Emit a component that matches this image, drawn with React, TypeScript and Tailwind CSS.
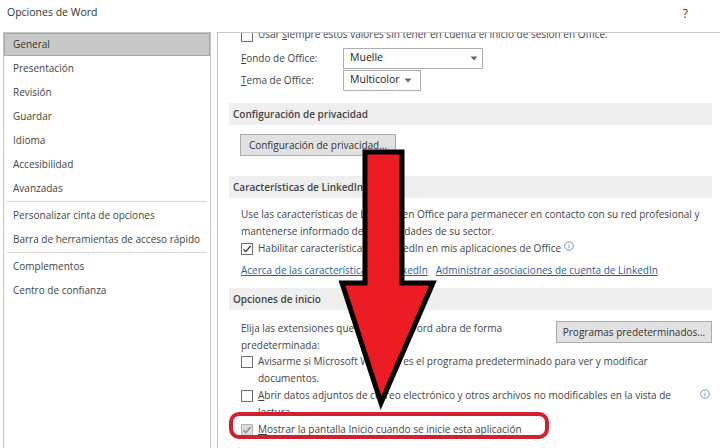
import React from 'react';

const navTop = ['Presentación', 'Revisión', 'Guardar', 'Idioma', 'Accesibilidad', 'Avanzadas'];

const Box = ({ checked, disabled }: { checked?: boolean; disabled?: boolean }) => (
  <span
    className={
      'mt-[3px] flex h-[12px] w-[12px] shrink-0 items-center justify-center border ' +
      (disabled ? 'border-[#b5b5b5] bg-[#dcdcdc]' : 'border-[#6f6f6f] bg-white')
    }
  >
    {checked && (
      <svg width="10" height="10" viewBox="0 0 10 10">
        <path d="M1.5 5.2 L3.8 7.6 L8.6 2" fill="none" stroke={disabled ? '#8a8a8a' : '#333'} strokeWidth="1.3" />
      </svg>
    )}
  </span>
);

const Info = () => (
  <svg width="10" height="10" viewBox="0 0 10 10" className="inline-block align-[1px]">
    <circle cx="5" cy="5" r="4.3" fill="none" stroke="#6b8bc0" strokeWidth="0.9" />
    <rect x="4.55" y="4.2" width="0.9" height="3.2" fill="#6b8bc0" />
    <rect x="4.55" y="2.5" width="0.9" height="0.9" fill="#6b8bc0" />
  </svg>
);

const Caret = () => (
  <svg width="8" height="5" viewBox="0 0 8 5">
    <path d="M0.5 0.5 L7.5 0.5 L4 4.5 Z" fill="#6a6a6a" />
  </svg>
);

const Section = ({ title }: { title: string }) => (
  <div className="flex h-[22px] items-center bg-[#efefef] pl-[4px] font-semibold text-[#444]">{title}</div>
);

export default function App() {
  return (
    <div className="relative h-[448px] w-[720px] overflow-hidden bg-white font-['Open_Sans',sans-serif] text-[10px] text-[#444]">
      <div className="flex h-[32px] items-start justify-between pl-[7px] pr-[32px] pt-[5px] text-[10.5px] text-[#333]">
        <span>Opciones de Word</span>
        <span className="text-[12px]">?</span>
      </div>

      <div className="flex h-[416px] pl-[3px]">
        <div className="flex w-[208px] flex-col border border-b-0 border-[#c4c4c4]">
          <div className="flex h-[23px] shrink-0 items-center border border-[#a9a9a9] bg-[#c8c8c8] pl-[8px] text-[#333]">General</div>
          {navTop.map((n) => (
            <div key={n} className="flex h-[24px] shrink-0 items-center pl-[9px]">{n}</div>
          ))}
          <div className="mx-[3px] my-[1px] h-px bg-[#d8d8d8]" />
          <div className="flex h-[24px] items-center pl-[9px]">Personalizar cinta de opciones</div>
          <div className="flex h-[24px] items-center pl-[9px]">Barra de herramientas de acceso rápido</div>
          <div className="mx-[3px] my-[1px] h-px bg-[#d8d8d8]" />
          <div className="flex h-[24px] items-center pl-[9px]">Complementos</div>
          <div className="flex h-[24px] items-center pl-[9px]">Centro de confianza</div>
        </div>

        <div className="ml-[6px] flex-1 overflow-hidden border-l border-t border-[#c4c4c4] pl-[11px] pr-[8px]">
          <div className="-mt-[10px]">
            <div className="flex h-[22px] items-center gap-[5px] pl-[12px]">
              <Box />
              <span className="leading-[17px]">
                Usar <u>s</u>iempre estos valores sin tener en cuenta el inicio de sesión en Office.
              </span>
            </div>
            <div className="mt-[2px] flex h-[22px] items-center pl-[12px]">
              <span className="w-[102px]"><u>F</u>ondo de Office:</span>
              <div className="flex h-[21px] w-[140px] items-center justify-between border border-[#abadb3] pl-[6px] pr-[4px] text-[10.5px] text-[#222]">
                <span>Muelle</span>
                <Caret />
              </div>
            </div>
            <div className="flex h-[22px] items-center pl-[12px]">
              <span className="w-[102px]"><u>T</u>ema de Office:</span>
              <div className="flex h-[21px] w-[78px] items-center justify-between border border-[#abadb3] pl-[6px] pr-[8px] text-[10.5px] text-[#222]">
                <span>Multicolor</span>
                <Caret />
              </div>
            </div>

            <div className="mt-[12px]">
              <Section title="Configuración de privacidad" />
            </div>
            <div className="mt-[9px] pl-[11px]">
              <div className="flex h-[22px] w-[156px] items-center justify-center border border-[#adadad] bg-[#e1e1e1] text-[#333]">
                Configuración de privacidad...
              </div>
            </div>

            <div className="mt-[20px]">
              <Section title="Características de LinkedIn" />
            </div>
            <div className="mt-[8px] pl-[12px] leading-[17px]">
              <p>Use las características de LinkedIn en Office para permanecer en contacto con su red profesional y</p>
              <p>mantenerse informado de las novedades de su sector.</p>
              <div className="flex gap-[5px]">
                <Box checked />
                <span>
                  Habilitar características de LinkedIn en mis aplicaciones de Office <Info />
                </span>
              </div>
              <div className="mt-[5px] flex gap-[8px] text-[#2e5c9e] underline">
                <span>Acerca de las características de LinkedIn</span>
                <span>Administrar asociaciones de cuenta de LinkedIn</span>
              </div>
            </div>

            <div className="mt-[9px]">
              <Section title="Opciones de inicio" />
            </div>
            <div className="mt-[10px] pl-[12px] leading-[17px]">
              <div className="flex items-start justify-between">
                <p className="w-[300px]">Elija las extensiones que desea que Word abra de forma predeterminada:</p>
                <div className="mt-[1px] flex h-[22px] w-[156px] items-center justify-center border border-[#adadad] bg-[#e1e1e1] text-[#333]">
                  Programas predeterminados...
                </div>
              </div>
              <div className="mt-[-1px] flex gap-[5px]">
                <Box />
                <span>
                  Avisarme si Microsoft Word no es el programa predeterminado para ver y modificar
                  <br />
                  documentos.
                </span>
              </div>
              <div className="flex gap-[5px] pr-[2px]">
                <Box />
                <span className="flex-1">
                  <u>A</u>brir datos adjuntos de correo electrónico y otros archivos no modificables en la vista de
                  <br />
                  lectura
                </span>
                <span className="mt-[1px]"><Info /></span>
              </div>
              <div className="flex gap-[5px]">
                <Box checked disabled />
                <span>
                  <u>M</u>ostrar la pantalla Inicio cuando se inicie esta aplicación
                </span>
              </div>
            </div>
          </div>
        </div>
      </div>

      <div className="absolute left-[229px] top-[412px] h-[27px] w-[320px] rounded-[10px] border-[4px] border-[#d3202f]" />

      <svg className="absolute left-0 top-0" width="720" height="448" viewBox="0 0 720 448">
        <polygon
          points="365,152 402,152 402,283 433,283 381,403 342,283 365,283"
          fill="#ec1c24"
          stroke="#000"
          strokeWidth="5"
          strokeLinejoin="miter"
        />
      </svg>
    </div>
  );
}
